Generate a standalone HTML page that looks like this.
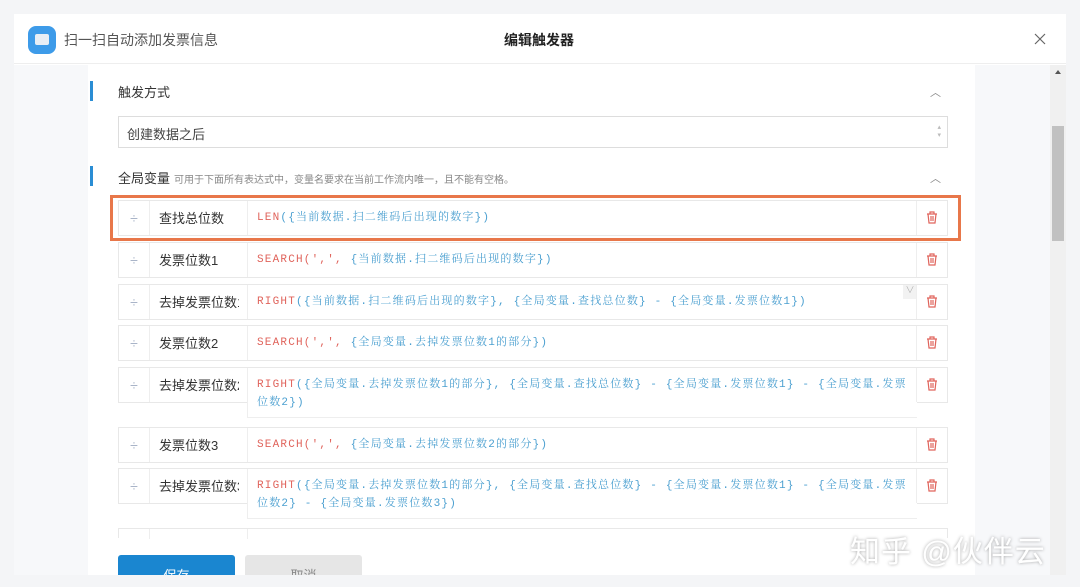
<!DOCTYPE html>
<html><head><meta charset="utf-8"><style>
*{box-sizing:border-box;margin:0;padding:0}
body{width:1080px;height:587px;background:#f4f5f7;font-family:"Liberation Sans","Noto Sans CJK SC",sans-serif;position:relative;overflow:hidden;color:#333}
.modal{position:absolute;left:14px;top:14px;width:1052px;height:561px;background:#fff;overflow:hidden}
.hdr{height:50px;border-bottom:1px solid #eee;position:relative;background:#fff}
.logo{position:absolute;left:14px;top:12px;width:28px;height:28px;border-radius:8px;background:#3d9be9}
.logo i{position:absolute;left:7px;top:8px;width:14px;height:11px;background:#e8eef5;border-radius:2px}
.apptitle{position:absolute;left:50px;top:16px;font-size:14px;color:#555}
.title{position:absolute;left:490px;top:16px;font-size:14px;font-weight:bold;color:#222}
.close{position:absolute;right:20px;top:19px}
.lp{position:absolute;left:0;top:51px;width:74px;height:510px;background:#f7f8fa}
.rp{position:absolute;left:961px;top:51px;width:75px;height:510px;background:#f7f8fa}
.sb{position:absolute;left:1036px;top:51px;width:16px;height:510px;background:#f0f0f0}
.sb i{position:absolute;left:2px;top:61px;width:12px;height:115px;background:#c1c1c1}
.sb b{position:absolute;left:5px;top:5px;border:3px solid transparent;border-bottom:4px solid #555;border-top:0}
.sec{position:absolute;left:76px;width:3px;height:20px;background:#2a8dd4}
.lbl{position:absolute;left:104px;font-size:13px;color:#333}
.hint{font-size:10px;color:#888;margin-left:4px}
.car{position:absolute;left:916px;font-size:11px;color:#888}
.sel{position:absolute;left:104px;top:102px;width:830px;height:32px;border:1px solid #ddd;font-size:13px;padding:7px 8px;color:#444}
.row{position:absolute;left:104px;width:830px;height:36px;border:1px solid #e8e8e8;background:#fff}
.row .d{position:absolute;left:0;top:0;width:31px;height:34px;border-right:1px solid #eee;color:#a9b4c8;text-align:center;line-height:34px;font-size:14px}
.row .n{position:absolute;left:40px;top:7px;font-size:13px;color:#333;width:80px;overflow:hidden;white-space:nowrap}
.row .e{position:absolute;left:128px;top:0;width:670px;min-height:34px;border-left:1px solid #eee;background:#fff;padding:8px 9px;font-family:"Liberation Mono","Noto Serif CJK SC",monospace;font-size:11px;letter-spacing:1.2px;line-height:18px;color:#4a9fd0}
.row .e.tall{height:50px;border-bottom:1px solid #eee}
.row .e .f{color:#e0645c}
.row .t{position:absolute;right:0;top:0;width:31px;height:34px;border-left:1px solid #eee}
.row .t svg{position:absolute;left:9px;top:10px}
.hl{position:absolute;left:96px;top:181px;width:851px;height:46px;border:3px solid #e8774a}
.btn{position:absolute;top:541px;width:117px;height:30px;border-radius:3px;font-size:13px;text-align:center;padding-top:10px}
.wm{position:absolute;left:850px;top:527px;font-size:30px;color:#fff;text-shadow:0 0 3px rgba(0,0,0,.35);letter-spacing:1px}
</style></head><body>
<div class="modal">
 <div class="hdr"><div class="logo"><i></i></div><div class="apptitle">扫一扫自动添加发票信息</div><div class="title">编辑触发器</div><svg class="close" width="12" height="12" viewBox="0 0 12 12" stroke="#666" stroke-width="1.2"><path d="M1 1l10 10M11 1L1 11"/></svg></div>
 <div class="lp"></div><div class="rp"></div><div class="sb"><b></b><i></i></div>
 <div class="sec" style="top:67px"></div><div class="lbl" style="top:68px">触发方式</div><div class="car" style="top:70px">︿</div>
 <div class="sel">创建数据之后<span style="position:absolute;right:6px;top:7px;font-size:7px;color:#bbb;line-height:8px">▴<br>▾</span></div>
 <div class="sec" style="top:152px"></div><div class="lbl" style="top:154px">全局变量<span class="hint">可用于下面所有表达式中，变量名要求在当前工作流内唯一，且不能有空格。</span></div><div class="car" style="top:156px">︿</div>

 <div class="row" style="top:186px"><div class="d">÷</div><div class="n">查找总位数</div><div class="e"><span class="f">LEN</span>({当前数据.扫二维码后出现的数字})</div><div class="t"><svg width="12" height="13" viewBox="0 0 12 13" fill="none" stroke="#e0645c" stroke-width="1.2"><path d="M1 3h10M4 3V1h4v2M2 3l1 9h6l1-9M5 5v5M7 5v5"/></svg></div></div>
 <div class="row" style="top:228px"><div class="d">÷</div><div class="n">发票位数1</div><div class="e"><span class="f">SEARCH(',', </span>{当前数据.扫二维码后出现的数字})</div><div class="t"><svg width="12" height="13" viewBox="0 0 12 13" fill="none" stroke="#e0645c" stroke-width="1.2"><path d="M1 3h10M4 3V1h4v2M2 3l1 9h6l1-9M5 5v5M7 5v5"/></svg></div></div>
 <div class="row" style="top:270px"><div class="d">÷</div><div class="n">去掉发票位数1</div><div class="e"><span class="f">RIGHT</span>({当前数据.扫二维码后出现的数字}, {全局变量.查找总位数} - {全局变量.发票位数1})<span style="position:absolute;right:0;top:0;width:14px;height:14px;background:#f2f2f2;color:#999;font-size:9px;line-height:12px;text-align:center;letter-spacing:0">∨</span></div><div class="t"><svg width="12" height="13" viewBox="0 0 12 13" fill="none" stroke="#e0645c" stroke-width="1.2"><path d="M1 3h10M4 3V1h4v2M2 3l1 9h6l1-9M5 5v5M7 5v5"/></svg></div></div>
 <div class="row" style="top:311px"><div class="d">÷</div><div class="n">发票位数2</div><div class="e"><span class="f">SEARCH(',', </span>{全局变量.去掉发票位数1的部分})</div><div class="t"><svg width="12" height="13" viewBox="0 0 12 13" fill="none" stroke="#e0645c" stroke-width="1.2"><path d="M1 3h10M4 3V1h4v2M2 3l1 9h6l1-9M5 5v5M7 5v5"/></svg></div></div>
 <div class="row" style="top:353px"><div class="d">÷</div><div class="n">去掉发票位数2</div><div class="e tall"><span class="f">RIGHT</span>({全局变量.去掉发票位数1的部分}, {全局变量.查找总位数} - {全局变量.发票位数1} - {全局变量.发票位数2})</div><div class="t"><svg width="12" height="13" viewBox="0 0 12 13" fill="none" stroke="#e0645c" stroke-width="1.2"><path d="M1 3h10M4 3V1h4v2M2 3l1 9h6l1-9M5 5v5M7 5v5"/></svg></div></div>
 <div class="row" style="top:413px"><div class="d">÷</div><div class="n">发票位数3</div><div class="e"><span class="f">SEARCH(',', </span>{全局变量.去掉发票位数2的部分})</div><div class="t"><svg width="12" height="13" viewBox="0 0 12 13" fill="none" stroke="#e0645c" stroke-width="1.2"><path d="M1 3h10M4 3V1h4v2M2 3l1 9h6l1-9M5 5v5M7 5v5"/></svg></div></div>
 <div class="row" style="top:454px"><div class="d">÷</div><div class="n">去掉发票位数3</div><div class="e tall"><span class="f">RIGHT</span>({全局变量.去掉发票位数1的部分}, {全局变量.查找总位数} - {全局变量.发票位数1} - {全局变量.发票位数2} - {全局变量.发票位数3})</div><div class="t"><svg width="12" height="13" viewBox="0 0 12 13" fill="none" stroke="#e0645c" stroke-width="1.2"><path d="M1 3h10M4 3V1h4v2M2 3l1 9h6l1-9M5 5v5M7 5v5"/></svg></div></div>
 <div class="row" style="top:514px;height:10px;border-bottom:none"><div class="d" style="height:10px"></div><div class="e" style="min-height:10px;height:10px;padding:0"></div></div>
 <div class="hl"></div>
 <div class="btn" style="left:104px;background:#1a86d0;color:#fff">保存</div>
 <div class="btn" style="left:231px;background:#e6e6e6;color:#888">取消</div>
</div>
<div class="wm">知乎 @伙伴云</div>
</body></html>
